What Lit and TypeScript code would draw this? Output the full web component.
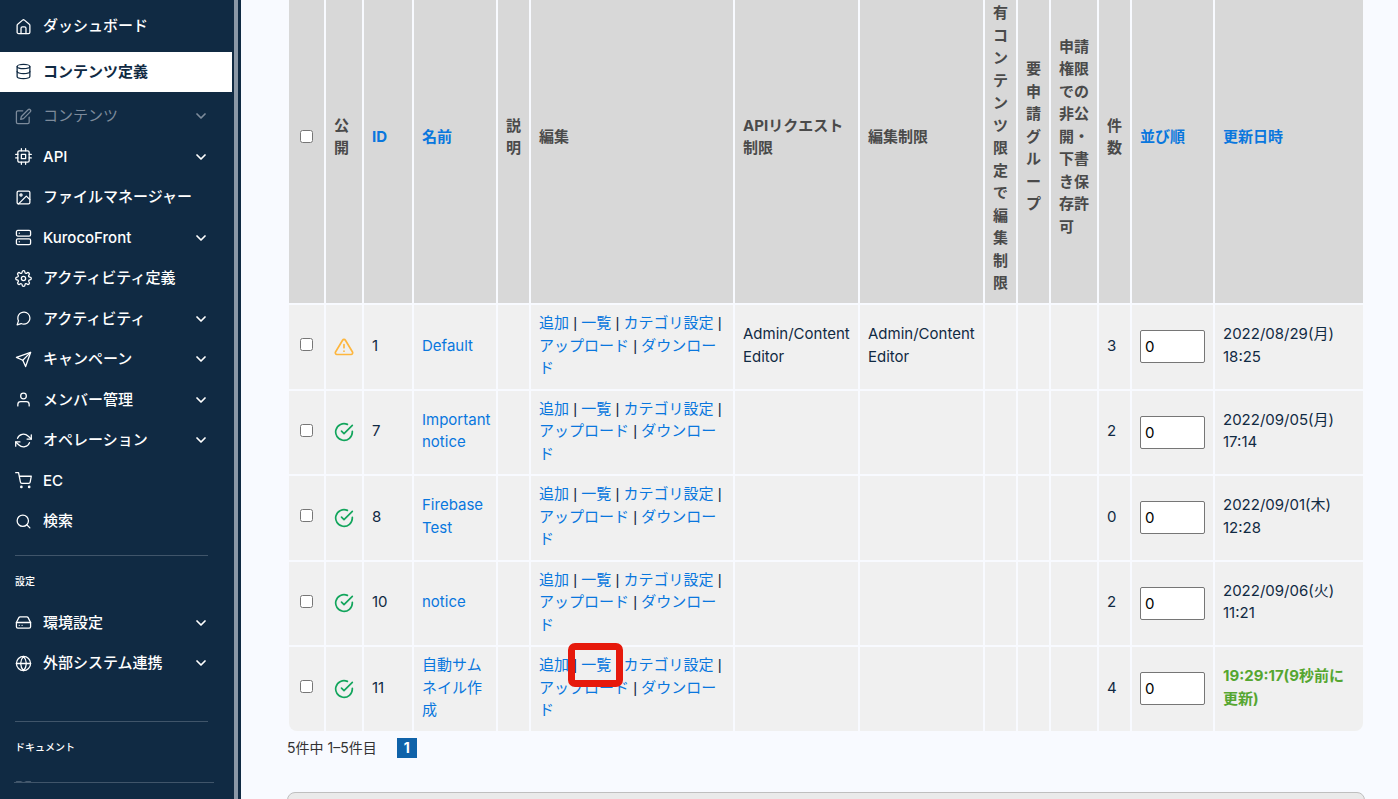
import { LitElement, html, svg, css, nothing } from "lit";
import { customElement } from "lit/decorators.js";
import { classMap } from "lit/directives/class-map.js";

const icons: Record<string, unknown> = {
  home: svg`<path d="M3 10.5a2 2 0 0 1 .8-1.6l6.9-5.9a2 2 0 0 1 2.6 0l6.9 5.9a2 2 0 0 1 .8 1.6V20a2 2 0 0 1-2 2H5a2 2 0 0 1-2-2z"/><path d="M8.5 22v-7.500a2 2 0 0 1 2-2h3a2 2 0 0 1 2 2V22"/>`,
  database: svg`<ellipse cx="12" cy="5" rx="9" ry="3"/><path d="M21 12c0 1.660-4 3-9 3s-9-1.340-9-3"/><path d="M3 5v14c0 1.660 4 3 9 3s9-1.340 9-3V5"/>`,
  edit: svg`<path d="M11 4H4a2 2 0 0 0-2 2v14a2 2 0 0 0 2 2h14a2 2 0 0 0 2-2v-7"/><path d="M18.500 2.500a2.121 2.121 0 0 1 3 3L12 15l-4 1 1-4z"/>`,
  cpu: svg`<rect x="4" y="4" width="16" height="16" rx="2"/><rect x="9" y="9" width="6" height="6"/><path d="M9 1v3M15 1v3M9 20v3M15 20v3M20 9h3M20 14h3M1 9h3M1 14h3"/>`,
  image: svg`<rect x="3" y="3" width="18" height="18" rx="2"/><circle cx="8.5" cy="8.5" r="1.500"/><path d="M21 15l-5-5L5 21"/>`,
  server: svg`<rect x="2" y="2" width="20" height="8" rx="2"/><rect x="2" y="14" width="20" height="8" rx="2"/><path d="M6 6h.01M6 18h.01"/>`,
  settings: svg`<circle cx="12" cy="12" r="3"/><path d="M19.400 15a1.650 1.650 0 0 0 .33 1.820l.06.06a2 2 0 0 1-2.830 2.830l-.06-.06a1.650 1.650 0 0 0-1.820-.33 1.650 1.650 0 0 0-1 1.510V21a2 2 0 0 1-4 0v-.09A1.650 1.650 0 0 0 9 19.400a1.650 1.650 0 0 0-1.820.33l-.06.06a2 2 0 0 1-2.830-2.830l.06-.06a1.650 1.650 0 0 0 .33-1.820 1.650 1.650 0 0 0-1.510-1H3a2 2 0 0 1 0-4h.09A1.650 1.650 0 0 0 4.600 9a1.650 1.650 0 0 0-.33-1.820l-.06-.06a2 2 0 0 1 2.830-2.830l.06.06a1.650 1.650 0 0 0 1.820.33H9a1.650 1.650 0 0 0 1-1.510V3a2 2 0 0 1 4 0v.09a1.650 1.650 0 0 0 1 1.510 1.650 1.650 0 0 0 1.820-.33l.06-.06a2 2 0 0 1 2.830 2.830l-.06.06a1.650 1.650 0 0 0-.33 1.820V9a1.650 1.650 0 0 0 1.510 1H21a2 2 0 0 1 0 4h-.09a1.650 1.650 0 0 0-1.510 1z"/>`,
  message: svg`<path d="M21 11.500a8.380 8.380 0 0 1-.9 3.800 8.500 8.500 0 0 1-7.600 4.700 8.380 8.380 0 0 1-3.800-.9L3 21l1.900-5.700a8.380 8.380 0 0 1-.9-3.800 8.500 8.500 0 0 1 4.700-7.600 8.380 8.380 0 0 1 3.800-.9h.5a8.480 8.480 0 0 1 8 8z"/>`,
  send: svg`<path d="M22 2L11 13"/><path d="M22 2l-7 20-4-9-9-4z"/>`,
  user: svg`<path d="M20 21v-2a4 4 0 0 0-4-4H8a4 4 0 0 0-4 4v2"/><circle cx="12" cy="7" r="4"/>`,
  refresh: svg`<path d="M23 4v6h-6M1 20v-6h6"/><path d="M3.510 9a9 9 0 0 1 14.850-3.360L23 10M1 14l4.640 4.360A9 9 0 0 0 20.490 15"/>`,
  cart: svg`<circle cx="9" cy="21" r="1"/><circle cx="20" cy="21" r="1"/><path d="M1 1h4l2.680 13.390a2 2 0 0 0 2 1.610h9.720a2 2 0 0 0 2-1.610L23 6H6"/>`,
  search: svg`<circle cx="11" cy="11" r="8"/><path d="M21 21l-4.350-4.350"/>`,
  drive: svg`<path d="M22 12H2"/><path d="M5.450 5.110L2 12v6a2 2 0 0 0 2 2h16a2 2 0 0 0 2-2v-6l-3.450-6.890A2 2 0 0 0 16.760 4H7.240a2 2 0 0 0-1.790 1.110z"/><path d="M6 16h.01M10 16h.01"/>`,
  globe: svg`<circle cx="12" cy="12" r="10"/><path d="M2 12h20"/><path d="M12 2a15.300 15.300 0 0 1 4 10 15.300 15.300 0 0 1-4 10 15.300 15.300 0 0 1-4-10 15.300 15.300 0 0 1 4-10z"/>`,
  book: svg`<path d="M2 3h6a4 4 0 0 1 4 4v14a3 3 0 0 0-3-3H2zM22 3h-6a4 4 0 0 0-4 4v14a3 3 0 0 1 3-3h7z"/>`,
  chevron: svg`<path d="M6 9l6 6 6-6"/>`,
  ok: svg`<path d="M22 11.080V12a10 10 0 1 1-5.930-9.140"/><path d="M22 4L12 14.010l-3-3"/>`,
  warn: svg`<path d="M10.290 3.860L1.820 18a2 2 0 0 0 1.710 3h16.940a2 2 0 0 0 1.710-3L13.710 3.860a2 2 0 0 0-3.420 0z"/><path d="M12 9v4M12 17h.01"/>`,
};

const icon = (name: string, cls: string) =>
  html`<svg class=${cls} viewBox="0 0 24 24" aria-hidden="true">${icons[name]}</svg>`;

interface NavItem { icon: string; label: string; sub?: boolean; active?: boolean; dim?: boolean }

const mainNav: NavItem[] = [
  { icon: "home", label: "ダッシュボード" },
  { icon: "database", label: "コンテンツ定義", active: true },
  { icon: "edit", label: "コンテンツ", sub: true, dim: true },
  { icon: "cpu", label: "API", sub: true },
  { icon: "image", label: "ファイルマネージャー" },
  { icon: "server", label: "KurocoFront", sub: true },
  { icon: "settings", label: "アクティビティ定義" },
  { icon: "message", label: "アクティビティ", sub: true },
  { icon: "send", label: "キャンペーン", sub: true },
  { icon: "user", label: "メンバー管理", sub: true },
  { icon: "refresh", label: "オペレーション", sub: true },
  { icon: "cart", label: "EC" },
  { icon: "search", label: "検索" },
];

const settingsNav: NavItem[] = [
  { icon: "drive", label: "環境設定", sub: true },
  { icon: "globe", label: "外部システム連携", sub: true },
];

@customElement("side-nav")
class SideNav extends LitElement {
  static styles = css`
    :host {
      display: flex;
      flex: none;
      width: 241px;
      height: 100%;
      background: #102a43;
      color: #fff;
      font-size: 15px;
      font-weight: 500;
      line-height: 1.5;
    }
    .panel { flex: 1; min-width: 0; display: flex; flex-direction: column; }
    .scroll { flex: 1; min-height: 0; overflow: hidden; padding-top: 6px; }
    .foot { height: 16px; margin: 0 18px 0 14px; border-top: 1px solid #40556a; }
    .track { width: 7px; margin-left: 2px; background: linear-gradient(to right, #8a97a6 4px, transparent 4px); }
    .item {
      display: flex;
      align-items: center;
      gap: 11px;
      padding: 9px 23px 9px 15px;
      color: inherit;
      text-decoration: none;
      white-space: nowrap;
    }
    .item.active {
      margin: 5px 0 4px;
      background: #fff;
      color: #102a43;
      font-weight: 700;
    }
    .item.dim { color: #7d8b9b; font-weight: 400; }
    .label { flex: 1; }
    .icon, .chev { fill: none; stroke: currentColor; stroke-linecap: round; stroke-linejoin: round; }
    .icon { width: 17px; height: 17px; stroke-width: 1.8; }
    .chev { width: 16px; height: 16px; stroke-width: 2.6; }
    .rule { height: 1px; margin: 13px 24px 0 15px; border: 0; background: #40556a; }
    .group + .rule { margin-top: 37px; }
    .title { margin: 0; padding: 18px 15px 14px; font-size: 10px; font-weight: 500; line-height: 15px; }
    .group + .rule + .title { padding-bottom: 16px; }
  `;

  private item(i: NavItem) {
    return html`<a href="#" class=${classMap({ item: true, active: !!i.active, dim: !!i.dim })}>
      ${icon(i.icon, "icon")}<span class="label">${i.label}</span>${i.sub ? icon("chevron", "chev") : nothing}
    </a>`;
  }

  render() {
    return html`
      <nav class="panel">
        <div class="scroll">
          ${mainNav.map((i) => this.item(i))}
          <hr class="rule">
          <h2 class="title">設定</h2>
          <div class="group">${settingsNav.map((i) => this.item(i))}</div>
          <hr class="rule">
          <h2 class="title">ドキュメント</h2>
          <a href="#" class="item dim" aria-label="ドキュメント">${icon("book", "icon")}</a>
        </div>
        <div class="foot"></div>
      </nav>
      <div class="track"></div>
    `;
  }
}

interface Row {
  id: number; name: string; ok: boolean; api: string; edit: string;
  count: number; date: string; recent?: boolean; marked?: boolean;
}

const rows: Row[] = [
  { id: 1, name: "Default", ok: false, api: "Admin/Content Editor", edit: "Admin/Content Editor", count: 3, date: "2022/08/29(月) 18:25" },
  { id: 7, name: "Important notice", ok: true, api: "", edit: "", count: 2, date: "2022/09/05(月) 17:14" },
  { id: 8, name: "Firebase Test", ok: true, api: "", edit: "", count: 0, date: "2022/09/01(木) 12:28" },
  { id: 10, name: "notice", ok: true, api: "", edit: "", count: 2, date: "2022/09/06(火) 11:21" },
  { id: 11, name: "自動サムネイル作成", ok: true, api: "", edit: "", count: 4, date: "19:29:17(9秒前に更新)", recent: true, marked: true },
];

@customElement("content-list")
class ContentList extends LitElement {
  static styles = css`
    :host { display: block; font-size: 15px; line-height: 1.5; color: #102a43; }
    .table {
      width: 100%;
      margin-top: -33px;
      table-layout: fixed;
      border-spacing: 2px;
    }
    .w31 { width: 31px; }
    .w35 { width: 35px; }
    .w36 { width: 36px; }
    .w46 { width: 46px; }
    .w48 { width: 48px; }
    .w81 { width: 81px; }
    .w82 { width: 82px; }
    .w123 { width: 123px; }
    .w148 { width: 148px; }
    th, td { box-sizing: border-box; text-align: left; vertical-align: middle; }
    th { height: 334px; padding: 9px 8px 7px; background: #d8d8d8; color: #4a4a4a; font-weight: 700; line-break: anywhere; }
    td { padding: 7px 8px 9px; background: #f0f0f0; }
    .control { padding: 8px; }
    .links { font-family: "Liberation Sans", "Noto Sans CJK JP", sans-serif; }
    tbody tr:last-child td:first-child { border-bottom-left-radius: 8px; }
    tbody tr:last-child td:last-child { border-bottom-right-radius: 8px; }
    a { color: #0977de; text-decoration: none; }
    .pick { text-align: center; }
    .check { display: block; width: 13px; height: 13px; margin: 0 auto 2px; }
    .status { display: block; width: 20px; height: 20px; fill: none; stroke: #12a55c; stroke-width: 2; stroke-linecap: round; stroke-linejoin: round; }
    .status.warn { stroke: #fdb63e; }
    .order {
      display: block;
      box-sizing: border-box;
      width: 100%;
      height: 33px;
      padding: 0 4px;
      border: 1px solid #767676;
      border-radius: 2px;
      background: #fff;
      color: #000;
      font: inherit;
    }
    .recent { color: #55a630; font-weight: 700; }
    .marked { position: relative; }
    .marked::after {
      content: "";
      position: absolute;
      inset: -11px -12px -11px -13px;
      border: 7px solid #e6190b;
      border-radius: 7px;
      pointer-events: none;
    }
    .marked { display: inline-block; line-height: 22px; }
    .pager { display: flex; align-items: center; gap: 20px; margin-top: 5px; font-size: 14px; line-height: 20px; color: #333; }
    .page { width: 20px; background: #0f62a9; color: #fff; font-weight: 700; text-align: center; }
    .box { height: 60px; margin-top: 34px; border: 1px solid #bfbfbf; border-radius: 8px; background: #eaeaea; }
  `;

  private row(r: Row) {
    return html`<tr>
      <td class="pick"><input class="check" type="checkbox" aria-label=${r.name}></td>
      <td class="control">${icon(r.ok ? "ok" : "warn", r.ok ? "status" : "status warn")}</td>
      <td>${r.id}</td>
      <td><a href="#">${r.name}</a></td>
      <td></td>
      <td class="links"><a href="#">追加</a> | <a href="#" class=${r.marked ? "marked" : ""}>一覧</a> | <a href="#">カテゴリ設定</a> | <a href="#">アップロード</a> | <a href="#">ダウンロード</a></td>
      <td>${r.api}</td>
      <td>${r.edit}</td>
      <td></td>
      <td></td>
      <td></td>
      <td>${r.count}</td>
      <td class="control"><input class="order" type="text" value="0" aria-label="並び順"></td>
      <td class=${r.recent ? "recent" : ""}>${r.date}</td>
    </tr>`;
  }

  render() {
    return html`
      <table class="table">
        <colgroup>
          <col class="w35"><col class="w36"><col class="w48"><col class="w82"><col class="w31"><col>
          <col class="w123"><col class="w123"><col class="w31"><col class="w31"><col class="w46">
          <col class="w31"><col class="w81"><col class="w148">
        </colgroup>
        <thead>
          <tr>
            <th class="pick"><input class="check" type="checkbox" aria-label="公開"></th>
            <th>公開</th>
            <th><a href="#">ID</a></th>
            <th><a href="#">名前</a></th>
            <th>説明</th>
            <th>編集</th>
            <th>APIリクエスト制限</th>
            <th>編集制限</th>
            <th>所有コンテンツ限定で編集制限</th>
            <th>要申請グループ</th>
            <th>申請権限での非公開・下書き保存許可</th>
            <th>件数</th>
            <th><a href="#">並び順</a></th>
            <th><a href="#">更新日時</a></th>
          </tr>
        </thead>
        <tbody>${rows.map((r) => this.row(r))}</tbody>
      </table>
      <div class="pager"><span>5件中 1–5件目</span><span class="page">1</span></div>
      <div class="box"></div>
    `;
  }
}

@customElement("app-root")
class AppRoot extends LitElement {
  static styles = css`
    :host {
      display: flex;
      height: 100vh;
      overflow: hidden;
      background: #f8faff;
      font-family: Inter, "Noto Sans CJK JP", sans-serif;
    }
    .main { flex: 1; min-width: 0; overflow: hidden; padding: 0 33px 0 46px; }
  `;

  render() {
    return html`<side-nav></side-nav><main class="main"><content-list></content-list></main>`;
  }
}
